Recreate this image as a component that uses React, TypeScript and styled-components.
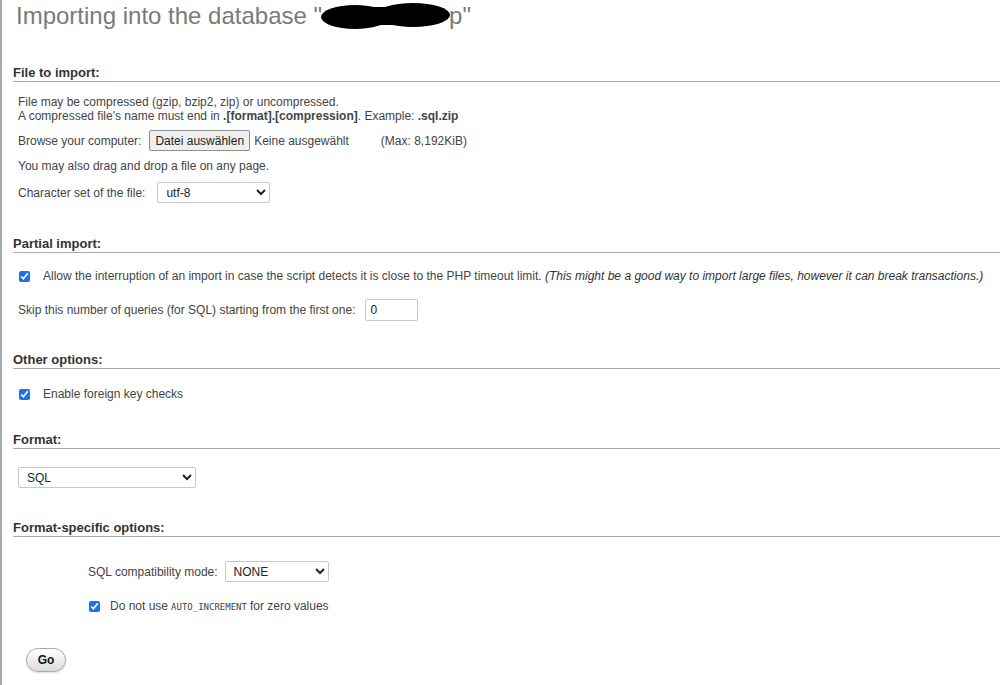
import React from 'react';
import styled, { createGlobalStyle } from 'styled-components';

const GlobalStyle = createGlobalStyle`
  html, body {
    margin: 0;
    padding: 0;
    background: #fff;
  }
  body {
    font-family: 'Liberation Sans', Arial, sans-serif;
    font-size: 12px;
    color: #444;
  }
`;

const Page = styled.div`
  min-height: 685px;
  border-left: 2px solid #a9a9a9;
  padding: 0 0 20px 11px;
  box-sizing: border-box;
`;

const Title = styled.h2`
  margin: 0;
  padding: 1px 0 0 3px;
  font-size: 24px;
  font-weight: normal;
  color: #7a7a7a;
  line-height: 30px;
  display: flex;
  align-items: center;
  white-space: pre;
`;

const Redaction = styled.svg`
  margin: 0 -2px 0 -1px;
`;

const Section = styled.section<{ $top: number }>`
  margin-top: ${(p) => p.$top}px;
`;

const Heading = styled.div`
  font-weight: bold;
  font-size: 13px;
  color: #333;
  line-height: 15px;
  padding-bottom: 1px;
  border-bottom: 1px solid #aaa;
`;

const Body = styled.div<{ $indent?: number }>`
  padding: 0 0 0 ${(p) => p.$indent ?? 5}px;
`;

const Line = styled.div<{ $top: number }>`
  margin-top: ${(p) => p.$top}px;
  display: flex;
  align-items: center;
  line-height: 14px;
`;

const Text = styled.p<{ $top: number }>`
  margin: ${(p) => p.$top}px 0 0;
  line-height: 14px;
`;

const Label = styled.span<{ $gap: number }>`
  margin-right: ${(p) => p.$gap}px;
`;

const FileButton = styled.button`
  font-family: inherit;
  font-size: 12px;
  color: #222;
  background: #efefef;
  border: 1px solid #8f8f8f;
  border-radius: 2px;
  padding: 0 5px;
  height: 21px;
  margin-right: 4px;
`;

const Muted = styled.span<{ $gap?: number }>`
  margin-right: ${(p) => p.$gap ?? 0}px;
`;

const Select = styled.select<{ $w: number }>`
  width: ${(p) => p.$w}px;
  height: 21px;
  font-family: inherit;
  font-size: 12px;
  color: #222;
  background: #fff;
  border: 1px solid #c8c8c8;
  border-radius: 2px;
  padding: 0 4px;
`;

const NumberInput = styled.input`
  width: 53px;
  height: 22px;
  box-sizing: border-box;
  font-family: inherit;
  font-size: 12px;
  color: #222;
  border: 1px solid #c8c8c8;
  border-radius: 2px;
  padding: 0 4px;
`;

const Check = styled.input<{ $gap?: number }>`
  width: 11px;
  height: 11px;
  margin: 0 ${(p) => p.$gap ?? 13}px 0 1px;
  accent-color: #1a73e8;
`;

const Note = styled.em`
  color: #333;
`;

const Code = styled.code`
  font-family: 'DejaVu Sans Mono', monospace;
  font-size: 9px;
  text-transform: uppercase;
  margin: 0 3px;
`;

const GoButton = styled.button`
  margin: 34px 0 0 13px;
  width: 40px;
  height: 24px;
  font-family: inherit;
  font-size: 12px;
  font-weight: bold;
  color: #111;
  border: 1px solid #aaa;
  border-radius: 12px;
  background: linear-gradient(#ffffff, #dcdcdc);
  box-shadow: 0 1px 2px rgba(0, 0, 0, 0.15);
`;

export default function App() {
  return (
    <>
      <GlobalStyle />
      <Page>
        <Title>
          Importing into the database "
          <Redaction width="130" height="28" viewBox="0 0 130 28">
            <ellipse cx="34" cy="15" rx="34" ry="12" fill="#000" />
            <ellipse cx="92" cy="13" rx="37" ry="12" fill="#000" />
            <rect x="20" y="5" width="92" height="18" rx="9" fill="#000" />
          </Redaction>
          p"
        </Title>

        <Section $top={34}>
          <Heading>File to import:</Heading>
          <Body>
            <Text $top={13}>
              File may be compressed (gzip, bzip2, zip) or uncompressed.
              <br />
              A compressed file's name must end in <b>.[format].[compression]</b>. Example: <b>.sql.zip</b>
            </Text>
            <Line $top={7}>
              <Label $gap={8}>Browse your computer:</Label>
              <FileButton type="button">Datei auswählen</FileButton>
              <Muted $gap={32}>Keine ausgewählt</Muted>
              <Muted>(Max: 8,192KiB)</Muted>
            </Line>
            <Text $top={8}>You may also drag and drop a file on any page.</Text>
            <Line $top={9}>
              <Label $gap={12}>Character set of the file:</Label>
              <Select $w={113} defaultValue="utf-8">
                <option>utf-8</option>
              </Select>
            </Line>
          </Body>
        </Section>

        <Section $top={33}>
          <Heading>Partial import:</Heading>
          <Body>
            <Line $top={16}>
              <Check type="checkbox" defaultChecked />
              <span>
                Allow the interruption of an import in case the script detects it is close to the PHP timeout limit.{' '}
                <Note>(This might be a good way to import large files, however it can break transactions.)</Note>
              </span>
            </Line>
            <Line $top={16}>
              <Label $gap={10}>Skip this number of queries (for SQL) starting from the first one:</Label>
              <NumberInput defaultValue="0" />
            </Line>
          </Body>
        </Section>

        <Section $top={31}>
          <Heading>Other options:</Heading>
          <Body>
            <Line $top={18}>
              <Check type="checkbox" defaultChecked />
              <span>Enable foreign key checks</span>
            </Line>
          </Body>
        </Section>

        <Section $top={31}>
          <Heading>Format:</Heading>
          <Body>
            <Line $top={18}>
              <Select $w={178} defaultValue="SQL">
                <option>SQL</option>
              </Select>
            </Line>
          </Body>
        </Section>

        <Section $top={32}>
          <Heading>Format-specific options:</Heading>
          <Body $indent={75}>
            <Line $top={24}>
              <Label $gap={7}>SQL compatibility mode:</Label>
              <Select $w={104} defaultValue="NONE">
                <option>NONE</option>
              </Select>
            </Line>
            <Line $top={17}>
              <Check type="checkbox" defaultChecked $gap={10} />
              <span>
                Do not use<Code>auto_increment</Code>for zero values
              </span>
            </Line>
          </Body>
        </Section>

        <GoButton type="button">Go</GoButton>
      </Page>
    </>
  );
}
